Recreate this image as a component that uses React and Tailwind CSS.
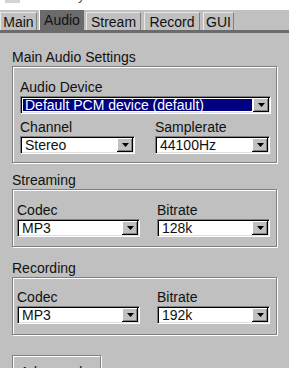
import React from "react";

function Arrow() {
  return (
    <div className="flex h-[14px] w-[16px] shrink-0 items-center justify-center bg-[#c0c0c0] shadow-[inset_-1px_-1px_0_#000,inset_1px_1px_0_#fff,inset_-2px_-2px_0_#808080]">
      <svg width="7" height="4" viewBox="0 0 7 4" aria-hidden="true">
        <polygon points="0,0 7,0 3.5,4" fill="#000" />
      </svg>
    </div>
  );
}

function Select({ value, selected = false, className = "" }) {
  return (
    <div
      className={`flex h-[18px] border border-t-[#808080] border-l-[#808080] border-b-white border-r-white bg-white p-px shadow-[inset_1px_1px_0_#000,inset_-1px_-1px_0_#dfdfdf] ${className}`}
    >
      <div className="flex min-w-0 flex-1 p-px">
        <div
          className={`flex min-w-0 flex-1 items-center whitespace-nowrap pl-[2px] leading-[14px] ${
            selected ? "bg-[#000080] text-white" : "text-[#111]"
          }`}
        >
          {value}
        </div>
      </div>
      <Arrow />
    </div>
  );
}

function Field({ label, value, selected }) {
  return (
    <div className="min-w-0">
      <div className="leading-[17px]">{label}</div>
      <Select value={value} selected={selected} />
    </div>
  );
}

function Group({ title, className = "", titleClass = "", children }) {
  return (
    <section className={className}>
      <div className={`leading-[17px] ${titleClass}`}>{title}</div>
      <div className="w-[265px] border border-[#808080] shadow-[inset_1px_1px_0_#fff,1px_1px_0_#fff]">
        {children}
      </div>
    </section>
  );
}

function Tab({ label, active = false, width }) {
  if (active) {
    return (
      <div
        className={`flex h-[20px] items-end justify-center border-l border-white bg-[#6b6b6b] leading-[18px] text-[#111] ${width}`}
      >
        <span className="pb-px">{label}</span>
      </div>
    );
  }
  return (
    <div
      className={`flex h-[18px] items-center justify-center border-t border-l border-r border-t-[#e8e8e8] border-l-[#e8e8e8] border-r-[#808080] leading-[18px] text-[#111] ${width}`}
    >
      {label}
    </div>
  );
}

export default function App() {
  return (
    <div className="h-[368px] w-[289px] overflow-hidden bg-[#c0c0c0] font-['Liberation_Sans',Arial,sans-serif] text-[14px] text-[#111]">
      <div className="flex h-[10px] overflow-hidden bg-white">
        <div className="ml-[5px] h-[3px] w-[15px] bg-[#d4d4d4]" />
        <span className="-mt-[13px] ml-[58px] leading-[16px] text-[#555]">y</span>
      </div>

      <div className="flex h-[20px] items-end">
        <Tab label="Main" width="w-[37px]" />
        <div className="w-[2px]" />
        <Tab label="Audio" active width="w-[45px]" />
        <div className="w-[2px]" />
        <Tab label="Stream" width="w-[55px]" />
        <div className="w-[3px]" />
        <Tab label="Record" width="w-[56px]" />
        <div className="w-[3px]" />
        <Tab label="GUI" width="w-[31px]" />
      </div>
      <div className="h-[3px] bg-[#6b6b6b]" />

      <div className="pl-[12px]">
        <Group title="Main Audio Settings" className="mt-[16px]">
          <div className="px-[7px] pb-[8px] pt-[12px]">
            <div className="w-[251px]">
              <Field label="Audio Device" value="Default PCM device (default)" selected />
            </div>
            <div className="mt-[5px] grid grid-cols-[115px_115px] gap-x-[20px]">
              <Field label="Channel" value="Stereo" />
              <Field label="Samplerate" value="44100Hz" />
            </div>
          </div>
        </Group>

        <Group title="Streaming" className="mt-[9px]">
          <div className="grid grid-cols-[123px_113px] gap-x-[17px] pb-[9px] pl-[4px] pt-[12px]">
            <Field label="Codec" value="MP3" />
            <Field label="Bitrate" value="128k" />
          </div>
        </Group>

        <Group title="Recording" className="mt-[13px]">
          <div className="grid grid-cols-[123px_113px] gap-x-[17px] pb-[10px] pl-[4px] pt-[11px]">
            <Field label="Codec" value="MP3" />
            <Field label="Bitrate" value="192k" />
          </div>
        </Group>

        <button
          type="button"
          className="mt-[20px] block h-[30px] w-[89px] border border-[#808080] pl-[7px] pt-[4px] text-left leading-[17px] text-[#111] shadow-[inset_1px_1px_0_#fff,1px_1px_0_#fff]"
        >
          Advanced...
        </button>
      </div>
    </div>
  );
}
